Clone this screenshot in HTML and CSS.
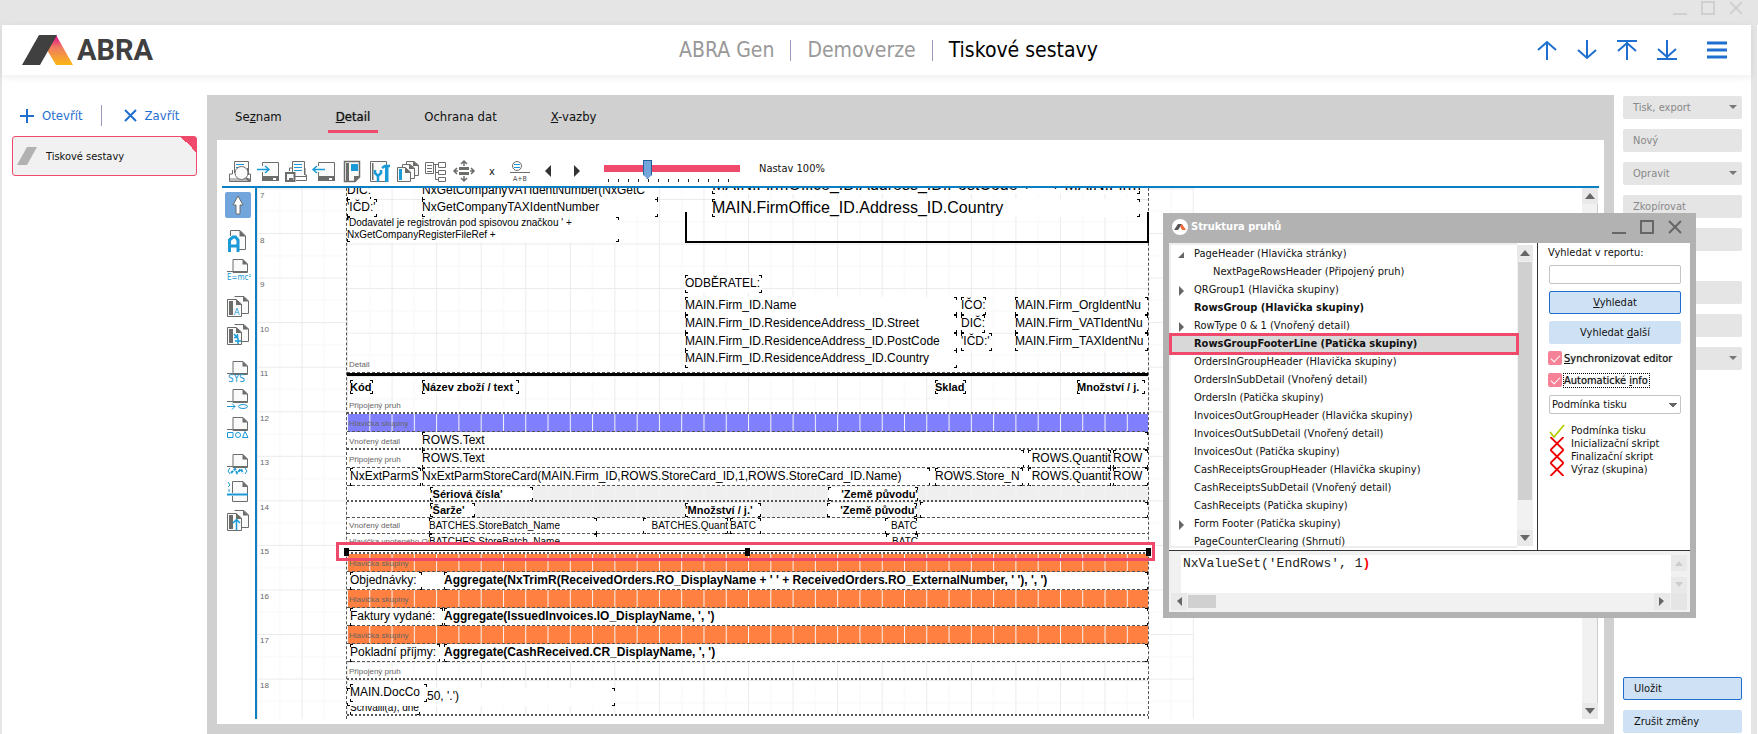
FILE: index.html
```
<!DOCTYPE html>
<html lang="cs">
<head>
    <meta charset="UTF-8">
    <meta name="viewport" content="width=device-width, initial-scale=1.0">
    <title>ABRA Gen - Tiskové sestavy</title>
    <link rel="stylesheet" href="styles.css">
</head>
<body>
    <!-- shared symbols -->
    <svg class="defs" aria-hidden="true">
        <defs>
            <linearGradient id="flame" x1="0" y1="0" x2="0" y2="1">
                <stop offset="0" stop-color="#e6008c"/>
                <stop offset="0.4" stop-color="#ee7a63"/>
                <stop offset="1" stop-color="#fbb714"/>
            </linearGradient>
            <pattern id="grid" width="44.56" height="44.56" patternUnits="userSpaceOnUse">
                <path d="M22.8 0V45M0 22.8H45" stroke="#f7f7f7" fill="none"/>
                <path d="M.5 0V45M0 .5H45" stroke="#ebebeb" fill="none"/>
            </pattern>
            <pattern id="cols" width="22.28" height="20" patternUnits="userSpaceOnUse">
                <path d="M.5 0V20" stroke="#f4f4f4" fill="none"/>
            </pattern>
            <symbol id="doc" viewBox="0 0 22 22">
                <path d="M6 12.5V1.5H16L20.500 6V14.500H6Z" fill="#fafafa" stroke="#6b6d6a"/>
                <path d="M15.500 1L21 6.500H15.500Z" fill="#6b6d6a"/>
                <path d="M0 13.500H21" stroke="#6b6d6a"/>
            </symbol>
            <symbol id="docs" viewBox="0 0 22 22">
                <path d="M7.500 1.500H17L21.500 6V18.500H12" fill="#fafafa" stroke="#6b6d6a"/>
                <path d="M16 1L22 6.500H16Z" fill="#6b6d6a"/>
                <path d="M.500 4.500H9L14.500 9V21.500H.500Z" fill="#fafafa" stroke="#6b6d6a"/>
                <path d="M9 4L15 10H9ZM2 6H6V20H2Z" fill="#6b6d6a"/>
            </symbol>
            <symbol id="cross" viewBox="0 0 15 13">
                <path d="M1 0L14 13M14 0L1 13" stroke="#f00000" stroke-width="1.800"/>
            </symbol>
        </defs>
    </svg>

    <div class="titlebar">
        <button type="button" aria-label="Minimalizovat"><svg width="16" height="16"><path d="M1 14H15" stroke="#d0d0d0" stroke-width="2"/></svg></button>
        <button type="button" aria-label="Maximalizovat"><svg width="16" height="16"><path d="M2 2H14V14H2Z" fill="none" stroke="#d0d0d0" stroke-width="2"/></svg></button>
        <button type="button" aria-label="Zavřít okno"><svg width="16" height="16"><path d="M2 2L14 14M14 2L2 14" stroke="#d0d0d0" stroke-width="2"/></svg></button>
    </div>

    <div class="app">
        <header class="header">
            <a class="logo" href="#" aria-label="ABRA">
                <svg width="52" height="30" viewBox="0 0 52 30"><path d="M25 15L34 0L51 30H34Z" fill="url(#flame)"/><path d="M0 30L17 0H35L18 30Z" fill="#404040"/></svg>
                <span>ABRA</span>
            </a>
            <nav class="crumbs">
                <a href="#">ABRA Gen</a>
                <a href="#">Demoverze</a>
                <span>Tiskové sestavy</span>
            </nav>
            <div class="header-tools">
                <button type="button" aria-label="Předchozí"><svg width="20" height="20"><path d="M10 20V2M1 10L10 2L19 10"/></svg></button>
                <button type="button" aria-label="Další"><svg width="20" height="20"><path d="M10 0V18M1 10L10 18L19 10"/></svg></button>
                <button type="button" aria-label="První"><svg width="20" height="20"><path d="M10 20V2M1 11L10 3L19 11M0 1H20"/></svg></button>
                <button type="button" aria-label="Poslední"><svg width="20" height="20"><path d="M10 0V18M1 9L10 17L19 9M0 19H20"/></svg></button>
                <button type="button" aria-label="Menu" class="menu"><svg width="20" height="20"><path d="M0 3H20M0 10H20M0 17H20"/></svg></button>
            </div>
        </header>

        <div class="workspace">
            <aside class="sidebar">
                <div class="agenda-actions">
                    <button type="button"><svg width="14" height="14"><path d="M7 0V14M0 7H14"/></svg>Otevřít</button>
                    <button type="button"><svg width="13" height="13"><path d="M1 1L12 12M12 1L1 12"/></svg>Zavřít</button>
                </div>
                <a class="agenda" href="#">
                    <svg width="20" height="18"><path d="M0 18L10 0H20L10 18Z" fill="#b2b2b2"/></svg>
                    Tiskové sestavy
                </a>
            </aside>

            <main class="main">
                <nav class="tabs">
                    <a href="#">Se<u>z</u>nam</a>
                    <a href="#" class="active"><u>D</u>etail</a>
                    <a href="#">Ochrana dat</a>
                    <a href="#"><u>X</u>-vazby</a>
                </nav>
                <div class="panel">
                    <div class="toolbar">
                        <button type="button" aria-label="Náhled"><svg class="icon"><path d="M5.500 13V1.500H19.500V15" fill="#fafafa" stroke="#6b6d6a"/><path d="M7 4.500H15M7 7.500H15" stroke="#1a9ad6"/><path d="M3.500 10V14H.500V21.500H21.500V14H18.500V8" fill="none" stroke="#6b6d6a"/><path d="M1 18H21V21H1Z" fill="#bbb"/><circle cx="12.500" cy="13" r="6.500" fill="#fafafa" stroke="#6b6d6a"/><path d="M17 18L21 21" stroke="#6b6d6a" stroke-width="2"/></svg></button>
                        <button type="button" aria-label="Import"><svg class="icon"><path d="M5.500 6V2.500H21.500V20.500H5.500V12" fill="#fafafa" stroke="#6b6d6a"/><path d="M5 16H22V21H5Z" fill="#6b6d6a"/><path d="M16 18H19V20H16Z" fill="#fff"/><path d="M0 9.500H11M8 6L12 9.500L8 13" fill="none" stroke="#1a9ad6" stroke-width="1.500"/></svg></button>
                        <button type="button" aria-label="Tisk"><svg class="icon"><path d="M7.500 13V1.500H19.500V15" fill="#fafafa" stroke="#6b6d6a"/><path d="M9 4.500H17M9 7.500H17M9 10.500H17" stroke="#1a9ad6"/><path d="M4.500 11V8H7M19 8H20V15H21.500V20.500H11M10 16.500H21" fill="none" stroke="#6b6d6a"/><path d="M1 13H9.500V21H1Z" fill="#fafafa" stroke="#6b6d6a" stroke-width="2"/><path d="M4 18H8V21H4Z" fill="#6b6d6a"/></svg></button>
                        <button type="button" aria-label="Export"><svg class="icon"><path d="M5.500 6V2.500H21.500V20.500H5.500V12" fill="#fafafa" stroke="#6b6d6a"/><path d="M5 16H22V21H5Z" fill="#6b6d6a"/><path d="M16 18H19V20H16Z" fill="#fff"/><path d="M1 9.500H12M4 6L0 9.500L4 13" fill="none" stroke="#1a9ad6" stroke-width="1.500"/></svg></button>
                        <button type="button" aria-label="Stránka"><svg class="icon"><path d="M3.500 1.500H18.500V17L14 21.500H3.500Z" fill="#fafafa" stroke="#6b6d6a" stroke-width="1.500"/><path d="M5 3H8V21H5ZM13 16H19L13 22Z" fill="#6b6d6a"/><path d="M10 4H17V11H10Z" fill="#1a9ad6"/></svg></button>
                        <button type="button" aria-label="Nastavení"><svg class="icon"><path d="M1.500 1.500H17.500V21.500H1.500Z" fill="#fafafa" stroke="#6b6d6a"/><path d="M3 3H4.500V20H3Z" fill="#6b6d6a"/><path d="M6 10V13L9 16V22M12 10V13L9 16M13 8L16 6H21" fill="none" stroke="#1a9ad6" stroke-width="2.500"/><path d="M16 7H19.500V22H16Z"/></svg></button>
                        <button type="button" aria-label="Kopie"><svg class="icon"><path d="M9.500 1.500H17L21.500 5V15.500H9.500Z" fill="#fafafa" stroke="#6b6d6a"/><path d="M16 1L22 6H16Z" fill="#6b6d6a"/><path d="M5.500 4.500H13L17.500 8V18.500H5.500Z" fill="#fafafa" stroke="#6b6d6a"/><path d="M12 4L18 9H12Z" fill="#6b6d6a"/><path d="M.500 7.500H8L13.500 12V21.500H.500Z" fill="#fafafa" stroke="#6b6d6a"/><path d="M8 7L14 13H8Z" fill="#6b6d6a"/><path d="M2 9H5V20H2Z" fill="#1a9ad6"/></svg></button>
                        <button type="button" aria-label="Struktura"><svg class="icon"><path d="M.500 2.500H8.500V13.500H.500ZM2 5.500H7M2 8.500H7M2 11.500H7M9 4.500H13M10.500 5V19.500H14M11 12.500H14M13.500 2.500H20.500V7.500H13.500ZM13.500 10.500H20.500V14.500H13.500ZM13.500 17.500H20.500V21.500H13.500Z" fill="none" stroke="#6b6d6a"/></svg></button>
                        <button type="button" aria-label="Posun"><svg class="icon"><path d="M6 7H16V10H6ZM6 12H16V15H6Z" fill="#6b6d6a"/><path d="M11 1V6M8 4L11 1L14 4M11 21V16M8 18L11 21L14 18M1 11H5M4 8L1 11L4 14M21 11H17M18 8L21 11L18 14" fill="none" stroke="#6b6d6a" stroke-width="1.500"/></svg></button>
                        <button type="button">x</button>
                        <button type="button" aria-label="Součet"><svg class="icon"><circle cx="8" cy="6" r="4.500" fill="#fff" stroke="#6b6d6a"/><path d="M5 4.500H11M5 7.500H11" stroke="#1a9ad6"/><path d="M1 12.500H21" stroke="#6b6d6a"/><text x="4" y="21" font-size="7" class="dark">A+B</text></svg></button>
                        <button type="button" aria-label="Vlevo"><svg class="icon"><path d="M14 5V17L8 11Z" fill="#333"/></svg></button>
                        <button type="button" aria-label="Vpravo"><svg class="icon"><path d="M9 5V17L15 11Z" fill="#333"/></svg></button>
                        <div class="zoom">
                            <input type="range" id="zoom" min="0" max="13" value="4">
                            <div class="ticks"></div>
                        </div>
                        <label for="zoom">Nastav 100%</label>
                    </div>

                    <div class="designer">
                        <div class="tools">
                            <div class="tool-group">
                                <button type="button" class="active" aria-label="Výběr"><svg class="icon"><path d="M11 2L16 11H13V20H9V11H6Z" fill="#fff" stroke="#6b6d6a"/></svg></button>
                            </div>
                            <div class="tool-group">
                                <button type="button" aria-label="Text"><svg class="icon"><path d="M3.500 6V.500H13L18.500 6V19.500H12" fill="#fafafa" stroke="#6b6d6a"/><path d="M12.500 0L19 6.500H12.500Z" fill="#6b6d6a"/><path d="M2.500 22V10L6 7H8.500L11 10V22M2 16H11" fill="none" stroke="#1a9ad6" stroke-width="3"/></svg></button>
                                <button type="button" aria-label="Výraz"><svg class="icon"><use href="#doc"/><text x="0" y="22" font-size="8">E=mc²</text></svg></button>
                            </div>
                            <div class="tool-group">
                                <button type="button" aria-label="Popisek"><svg class="icon"><use href="#docs"/><text x="7" y="20" font-size="9">A</text></svg></button>
                                <button type="button" aria-label="Vložit"><svg class="icon"><use href="#docs"/><path d="M7 11L10 14M10.500 11V14.500H7M11 15V21M8 18H14" fill="none" stroke="#1a9ad6" stroke-width="1.500"/></svg></button>
                            </div>
                            <div class="tool-group">
                                <button type="button" aria-label="Systém"><svg class="icon"><use href="#doc"/><text x="1" y="22" font-size="10">SYS</text></svg></button>
                                <button type="button" aria-label="Čára"><svg class="icon"><use href="#doc"/><path d="M0 18.500H8M5 15.500L8 18.500L5 21.500" fill="none" stroke="#1a9ad6"/><ellipse cx="16" cy="18.500" rx="4.500" ry="2" fill="none" stroke="#1a9ad6"/></svg></button>
                                <button type="button" aria-label="Tvary"><svg class="icon"><use href="#doc"/><path d="M.500 16.500H6V21.500H.500ZM18 15.500L21 21.500H15.500Z" fill="none" stroke="#1a9ad6"/><circle cx="11" cy="19" r="2.500" fill="none" stroke="#1a9ad6"/></svg></button>
                            </div>
                            <div class="tool-group">
                                <button type="button" aria-label="Kód"><svg class="icon"><use href="#doc"/><path d="M3 15L1 18L3 21M18 15L20 18L18 21" fill="none" stroke="#1a9ad6"/><path d="M4 20L8 16L10 20L14 16L16 20" fill="none" stroke="#1a9ad6" stroke-width="2" stroke-dasharray="3 1"/></svg></button>
                                <button type="button" aria-label="Zalomení"><svg class="icon"><path d="M5.500 12V.500H16L20.500 5V20.500H5.500V15" fill="#fafafa" stroke="#6b6d6a"/><path d="M15.500 0L21 6H15.500Z" fill="#6b6d6a"/><path d="M0 13.500H21" stroke="#1a9ad6" stroke-width="2"/><path d="M1 1L3 4L1 6M2 8V11" fill="none" stroke="#1a9ad6"/></svg></button>
                                <button type="button" aria-label="Podsestava"><svg class="icon"><use href="#docs"/><path d="M9.500 21V10M6 14L9.500 10.500L13 14" fill="none" stroke="#1a9ad6" stroke-width="1.500"/></svg></button>
                            </div>
                        </div>
                        <div class="surface">
                            <svg class="surface-grid" aria-hidden="true"><g transform="translate(0 45)"><rect y="-45" width="937" height="700" fill="url(#grid)"/></g></svg>
                            <div class="ruler"><span>7</span><span>8</span><span>9</span><span>10</span><span>11</span><span>12</span><span>13</span><span>14</span><span>15</span><span>16</span><span>17</span><span>18</span></div>
                            <div class="page" id="page"></div>
                        </div>
                        <div class="scroll">
                            <svg width="16" height="16"><path d="M3 11L8 5L13 11Z"/></svg>
                            <svg width="16" height="16"><path d="M3 5L8 11L13 5Z"/></svg>
                        </div>
                    </div>
                </div>
            </main>

            <aside class="actions">
                <button type="button" class="drop" disabled>Tisk, export</button>
                <button type="button" disabled>Nový</button>
                <button type="button" class="drop" disabled>Opravit</button>
                <button type="button" disabled>Zkopírovat</button>
                <button type="button" disabled aria-label="Vymazat"></button>
                <div class="spacer"></div>
                <button type="button" disabled aria-label="Filtr"></button>
                <button type="button" disabled aria-label="Třídění"></button>
                <button type="button" class="drop" disabled aria-label="Další funkce"></button>
                <button type="button" class="blue default push">Uložit</button>
                <button type="button" class="blue">Zrušit změny</button>
            </aside>
        </div>
    </div>

    <section class="dialog">
        <div class="dialog-title">
            <svg width="16" height="16"><circle cx="8" cy="8" r="8" fill="#fff"/><path d="M2 11L6 5H10L6 11Z" fill="#555"/><path d="M8 7L10 5L14 11H10Z" fill="#f26a3a"/></svg>
            <h2>Struktura pruhů</h2>
            <button type="button" aria-label="Minimalizovat"><svg width="16" height="16"><path d="M1 14H15" stroke="#666" stroke-width="2"/></svg></button>
            <button type="button" aria-label="Maximalizovat"><svg width="16" height="16"><path d="M2 2H14V14H2Z" fill="none" stroke="#666" stroke-width="2"/></svg></button>
            <button type="button" aria-label="Zavřít"><svg width="16" height="16"><path d="M2 2L14 14M14 2L2 14" stroke="#666" stroke-width="2"/></svg></button>
        </div>
        <div class="dialog-top">
            <ul class="tree">
                <li class="open">PageHeader (Hlavička stránky)</li>
                <li class="child">NextPageRowsHeader (Připojený pruh)</li>
                <li class="closed">QRGroup1 (Hlavička skupiny)</li>
                <li class="strong">RowsGroup (Hlavička skupiny)</li>
                <li class="closed">RowType 0 &amp; 1 (Vnořený detail)</li>
                <li class="strong selected">RowsGroupFooterLine (Patička skupiny)</li>
                <li>OrdersInGroupHeader (Hlavička skupiny)</li>
                <li>OrdersInSubDetail (Vnořený detail)</li>
                <li>OrdersIn (Patička skupiny)</li>
                <li>InvoicesOutGroupHeader (Hlavička skupiny)</li>
                <li>InvoicesOutSubDetail (Vnořený detail)</li>
                <li>InvoicesOut (Patička skupiny)</li>
                <li>CashReceiptsGroupHeader (Hlavička skupiny)</li>
                <li>CashReceiptsSubDetail (Vnořený detail)</li>
                <li>CashReceipts (Patička skupiny)</li>
                <li class="closed">Form Footer (Patička skupiny)</li>
                <li>PageCounterClearing (Shrnutí)</li>
            </ul>
            <div class="scroll tree-scroll">
                <svg width="16" height="16"><path d="M3 11L8 5L13 11Z"/></svg>
                <div class="thumb"></div>
                <svg width="16" height="16"><path d="M3 5L8 11L13 5Z"/></svg>
            </div>
            <form class="search">
                <label for="find">Vyhledat v reportu:</label>
                <input type="text" id="find">
                <button type="button" class="blue default"><u>V</u>yhledat</button>
                <button type="button" class="blue">Vyhledat <u>d</u>alší</button>
                <label class="check"><input type="checkbox" checked><span><u>S</u>ynchronizovat editor</span></label>
                <label class="check focus"><input type="checkbox" checked><span>Automatické <u>i</u>nfo</span></label>
                <select aria-label="Skript">
                    <option>Podmínka tisku</option>
                    <option>Inicializační skript</option>
                    <option>Finalizační skript</option>
                    <option>Výraz (skupina)</option>
                </select>
                <ul class="status">
                    <li><svg width="16" height="14"><path d="M1 8L5 13L15 1" fill="none" stroke="#b5cc00" stroke-width="1.800"/></svg>Podmínka tisku</li>
                    <li><svg width="16" height="13"><use href="#cross"/></svg>Inicializační skript</li>
                    <li><svg width="16" height="13"><use href="#cross"/></svg>Finalizační skript</li>
                    <li><svg width="16" height="13"><use href="#cross"/></svg>Výraz (skupina)</li>
                </ul>
            </form>
        </div>
        <div class="editor">
            <div class="editor-row">
                <code>NxValueSet('EndRows', 1<b>)</b></code>
                <div class="scroll off">
                    <svg width="16" height="16"><path d="M4 11L8 6L12 11Z"/></svg>
                    <svg width="16" height="16"><path d="M4 5L8 10L12 5Z"/></svg>
                </div>
            </div>
            <div class="hscroll">
                <svg width="16" height="17"><path d="M11 4V13L6 8Z"/></svg>
                <div class="thumb"></div>
                <svg width="16" height="17"><path d="M5 4V13L10 8Z"/></svg>
                <span class="corner"></span>
            </div>
        </div>
    </section>

    <script src="report.js"></script>
</body>
</html>
```
FILE: styles.css
```
* {
    box-sizing: border-box;
}

body {
    margin: 0;
    height: 100vh;
    overflow: hidden;
    display: flex;
    flex-direction: column;
    position: relative;
    background: #fff;
    color: #111;
    font-family: "DejaVu Sans Condensed", "Noto Sans", sans-serif;
    font-size: 11px;
}

button, input, select {
    font: inherit;
    color: inherit;
}

button {
    border: none;
    background: none;
    padding: 0;
}

a {
    color: inherit;
    text-decoration: none;
}

ul {
    list-style: none;
    margin: 0;
    padding: 0;
}

svg {
    display: block;
    flex: none;
}

.defs {
    position: absolute;
    width: 0;
    height: 0;
}

/* window frame */
.titlebar {
    height: 25px;
    flex: none;
    background: #e5e5e5;
    display: flex;
    justify-content: flex-end;
    align-items: flex-start;
    gap: 12px;
    padding-right: 14px;
}

.app {
    flex: 1;
    min-height: 0;
    display: flex;
    flex-direction: column;
    border-left: 2px solid #e5e5e5;
    border-right: 6px solid #e5e5e5;
    margin-right: 1px;
}

.header {
    height: 50px;
    flex: none;
    display: grid;
    grid-template-columns: 1fr auto 1fr;
    align-items: center;
    padding: 0 24px 0 20px;
    box-shadow: 0 2px 8px rgba(0, 0, 0, 0.08);
}

.logo {
    display: flex;
    align-items: center;
    gap: 3px;
    color: #404040;
    font: bold 29px/40px Roboto, sans-serif;
}

.crumbs {
    display: flex;
    align-items: center;
    font-size: 21px;
    line-height: 21px;
    color: #999;
    margin-left: 28px;
}

.crumbs > * + * {
    border-left: 1px solid #9999c0;
    padding-left: 16px;
    margin-left: 16px;
}

.crumbs span {
    color: #000;
}

.header-tools {
    display: flex;
    justify-content: flex-end;
    gap: 20px;
}

.header-tools path {
    stroke: #1f6fd0;
    stroke-width: 2;
    fill: none;
}

.header-tools .menu {
    margin-left: 10px;
}

.header-tools .menu path {
    stroke-width: 3;
}

.workspace {
    flex: 1;
    min-height: 0;
    display: flex;
    padding-top: 20px;
}

/* left side */
.sidebar {
    width: 205px;
    padding: 10px;
}

.agenda-actions {
    display: flex;
    font-size: 13px;
    color: #1f6fd0;
    padding: 0 8px;
    margin-bottom: 10px;
}

.agenda-actions button {
    display: flex;
    align-items: center;
    gap: 8px;
    height: 21px;
}

.agenda-actions button + button {
    border-left: 1px solid #9999c0;
    padding-left: 22px;
    margin-left: 18px;
}

.agenda-actions path {
    stroke: #1f6fd0;
    stroke-width: 2;
}

.agenda {
    display: flex;
    align-items: center;
    gap: 9px;
    height: 40px;
    padding-left: 4px;
    border: 1px solid #ef4a6b;
    border-radius: 3px;
    background: linear-gradient(45deg, transparent 50%, #ef4a6b 50%) top right / 15px 15px no-repeat #f1f1f1;
}

/* report panel */
.main {
    flex: 1;
    min-width: 0;
    display: flex;
    flex-direction: column;
    background: #d0d0d0;
    padding: 0 10px 10px;
}

.tabs {
    height: 45px;
    flex: none;
    display: flex;
    align-items: flex-start;
    gap: 38px;
    padding: 12px 10px 0;
    font-size: 13px;
}

.tabs a {
    line-height: 20px;
    padding: 0 8px 3px;
    border-bottom: 3px solid transparent;
}

.tabs .active {
    border-color: #ef4a6b;
    text-shadow: 0 0 1px #555;
}

.panel {
    flex: 1;
    min-height: 0;
    display: flex;
    flex-direction: column;
    background: #fff;
    padding: 16px 5px 5px;
}

.toolbar {
    height: 32px;
    flex: none;
    display: flex;
    align-items: flex-start;
    padding-left: 4px;
    padding-top: 4px;
    border-bottom: 2px solid #0a7fc4;
}

.toolbar button {
    width: 28px;
    height: 22px;
    display: flex;
    align-items: center;
    justify-content: center;
}

.icon {
    width: 22px;
    height: 22px;
    overflow: visible;
    fill: #1a9ad6;
}

.icon .dark {
    fill: #444;
}

.zoom {
    width: 136px;
    margin: 0 19px 0 14px;
}

.zoom input {
    appearance: none;
    display: block;
    width: 100%;
    height: 19px;
    margin: 0;
    background: linear-gradient(#ef4a6b, #ef4a6b) 0 5px / 100% 7px no-repeat;
}

.zoom input::-webkit-slider-thumb {
    appearance: none;
    width: 9px;
    height: 19px;
    background: #72a5dc;
    border: 1px solid #1b6298;
    clip-path: polygon(0 0, 100% 0, 100% 78%, 50% 100%, 0 78%);
}

.ticks {
    height: 3px;
    margin: 0 4px;
    background: repeating-linear-gradient(90deg, #222 0 1px, transparent 1px 10px);
}

.toolbar label {
    line-height: 18px;
}

.designer {
    flex: 1;
    min-height: 0;
    display: flex;
}

.tools {
    width: 35px;
    border-right: 2px solid #0a7fc4;
    padding: 4px 3px;
    display: flex;
    flex-direction: column;
    gap: 9px;
}

.tool-group {
    display: flex;
    flex-direction: column;
}

.tools button {
    width: 26px;
    height: 28px;
    display: flex;
    align-items: center;
    justify-content: center;
}

.tools .active {
    height: 26px;
    background: #72a5dc;
    border-radius: 2px;
}

.surface {
    flex: 1;
    min-width: 0;
    position: relative;
    overflow: hidden;
    font-family: "Liberation Sans", Arial, sans-serif;
}

.surface-grid {
    position: absolute;
    left: 0;
    top: 0;
    width: 937px;
    height: 100%;
}

.ruler {
    position: absolute;
    left: 3px;
    top: 2px;
    height: 501px;
    display: flex;
    flex-direction: column;
    justify-content: space-between;
    font-size: 8px;
    line-height: 11px;
    color: #666;
}

.page {
    position: relative;
    width: 803px;
    margin-left: 89px;
    border: dashed #555;
    border-width: 0 1px;
    background: #fff;
    height: 100%;
}

.band {
    position: relative;
}

.band-grid {
    position: absolute;
    left: 0;
    top: 0;
    width: 100%;
    height: 100%;
}

.band::after {
    content: "";
    position: absolute;
    left: 0;
    right: 0;
    bottom: 0;
    height: 1px;
    background: repeating-linear-gradient(90deg, #555 0 3px, transparent 3px 5px);
}

.band.heavy::after {
    height: 2px;
    background: repeating-linear-gradient(90deg, #555 0 2px, transparent 2px 4px);
}

.band.purple {
    background: #8080ff;
}

.band.orange {
    background: #ff8040;
}

.band.gray {
    background: #efefef;
}

.band.rule {
    border-top: 3px solid #000;
}

.band-label {
    position: absolute;
    left: 2px;
    bottom: 3px;
    font-size: 8px;
    line-height: 10px;
    color: #666;
}

.field {
    position: absolute;
    overflow: hidden;
    white-space: pre;
    font-size: 12px;
    line-height: 17px;
    color: #000;
    --ink: linear-gradient(#000, #000);
    background:
        var(--ink) 0 0 / 3px 1px, var(--ink) 0 0 / 1px 3px,
        var(--ink) 100% 0 / 3px 1px, var(--ink) 100% 0 / 1px 3px,
        var(--ink) 0 100% / 3px 1px, var(--ink) 0 100% / 1px 3px,
        var(--ink) 100% 100% / 3px 1px, var(--ink) 100% 100% / 1px 3px,
        #fff;
    background-repeat: no-repeat;
}

.field.large {
    font-size: 16px;
    line-height: 18px;
}

.field.bold {
    font-weight: bold;
}

.field.head {
    font-weight: bold;
    font-size: 11px;
    line-height: 14px;
}

.field.small {
    font-size: 10px;
    line-height: 12px;
}

.field.batch {
    font-size: 10px;
    line-height: 15px;
}

.field.right {
    text-align: right;
}

.field.blank {
    background: #fff;
}

.frame {
    position: absolute;
    border: 2px solid #000;
    border-top: none;
}

.selection {
    position: absolute;
    left: -11px;
    right: -7px;
    top: 354px;
    height: 19px;
    border: 3px solid #ef4a6b;
    background: linear-gradient(#fff, #fff) 0 0 / 100% 5px no-repeat;
}

.selection-line {
    position: absolute;
    left: -3px;
    right: -3px;
    top: 360px;
    height: 8px;
    display: flex;
    justify-content: space-between;
    background: linear-gradient(#000, #000) 0 2px / 100% 1px no-repeat;
}

.selection-line i {
    width: 5px;
    background: #000;
}

/* scroll bars */
.scroll {
    width: 16px;
    margin-right: 1px;
    display: flex;
    flex-direction: column;
    justify-content: space-between;
    background: #f1f1f1;
    border-right: 1px solid #ccc;
}

.scroll svg, .hscroll svg {
    background: #e9e9e9;
    fill: #666;
}

.thumb {
    background: #d0d0d0;
}

/* right side */
.actions {
    width: 137px;
    display: flex;
    flex-direction: column;
    gap: 10px;
    padding: 1px 9px;
}

.actions button {
    height: 23px;
    flex: none;
    text-align: left;
    padding-left: 10px;
    border-radius: 2px;
    background: #e5e5e5;
    color: #888;
}

.actions .drop {
    position: relative;
}

.actions .drop::after {
    content: "";
    position: absolute;
    right: 5px;
    top: 9px;
    border: 4px solid transparent;
    border-top-color: #777;
    border-bottom: none;
}

.actions .spacer {
    height: 10px;
}

.actions .push {
    margin-top: auto;
}

.actions .blue, .blue {
    background: #cfe1f5;
    color: #111;
    border: 1px solid #cfe1f5;
    border-radius: 2px;
}

.actions .default, .default {
    border-color: #1f6fd0;
}

/* band structure window */
.dialog {
    position: absolute;
    top: 213px;
    right: 62px;
    width: 533px;
    height: 405px;
    display: flex;
    flex-direction: column;
    border: 6px solid #b2b2b2;
    border-top: none;
    background: #fff;
}

.dialog-title {
    height: 30px;
    flex: none;
    display: flex;
    align-items: center;
    gap: 12px;
    padding: 0 7px 3px 3px;
    background: #b2b2b2;
}

.dialog-title h2 {
    flex: 1;
    margin: 0 0 0 -9px;
    font-size: 11px;
    color: #fff;
}

.dialog-top {
    flex: 1;
    min-height: 0;
    display: flex;
    border-bottom: 1px solid #333;
    padding-bottom: 2px;
}

/* the clip lets the selection outline reach past the sides */
.tree {
    flex: 1;
    min-width: 0;
    border: 2px solid #eee;
    border-right: none;
    clip-path: inset(0 -3px 0 -3px);
    z-index: 1;
}

.tree li {
    position: relative;
    height: 18px;
    line-height: 17px;
    padding-left: 23px;
    white-space: nowrap;
}

.tree .child {
    padding-left: 42px;
}

.tree .strong {
    font-weight: bold;
}

.tree .selected {
    background: #d8d8d8;
    outline: 3px solid #ef4a6b;
    outline-offset: -1px;
    z-index: 1;
}

.tree .closed::before {
    content: "";
    position: absolute;
    left: 8px;
    top: 5px;
    border: 5px solid transparent;
    border-left-color: #666;
    border-right: none;
}

.tree .open::before {
    content: "";
    position: absolute;
    left: 7px;
    top: 7px;
    border: 3px solid #666;
    border-top-color: transparent;
    border-left-color: transparent;
}

.tree-scroll {
    margin: 2px 4px 2px 0;
    border: none;
}

.tree-scroll .thumb {
    flex: 1;
    margin: 1px 1px 30px;
}

.search {
    width: 153px;
    display: flex;
    flex-direction: column;
    border-left: 1px solid #333;
    padding: 2px 9px 0 11px;
    margin-bottom: -2px;
}

.search > label:first-child {
    line-height: 16px;
    margin-bottom: 4px;
    margin-left: -1px;
}

.search input[type="text"], .search select {
    height: 19px;
    border: 1px solid #c4c4c4;
    border-radius: 2px;
    background: #fff;
    padding: 0 2px;
}

.search button {
    height: 23px;
    margin-top: 7px;
}

.check {
    display: flex;
    align-items: center;
    gap: 2px;
    height: 16px;
    margin: 6px 0 0 -1px;
    text-shadow: 0 0 1px #777;
    white-space: nowrap;
}

.check input {
    appearance: none;
    width: 14px;
    height: 14px;
    margin: 0;
    flex: none;
    border-radius: 2px;
    background: #f58296;
}

.check input::before {
    content: "";
    display: block;
    width: 8px;
    height: 4px;
    margin: 4px 3px;
    border-left: 1px solid #fff;
    border-bottom: 1px solid #fff;
    transform: rotate(-45deg);
}

.check.focus span {
    outline: 1px dotted #000;
    padding-right: 1px;
}

.search select {
    appearance: none;
    margin-top: 7px;
    background:
        linear-gradient(to top right, transparent 50%, #666 50%) right 7px top 7px / 4px 5px no-repeat,
        linear-gradient(to top left, transparent 50%, #666 50%) right 3px top 7px / 4px 5px no-repeat,
        #fff;
}

.status {
    margin-top: 10px;
}

.status li {
    display: flex;
    align-items: center;
    gap: 6px;
    height: 13px;
    white-space: nowrap;
}

.editor {
    height: 61px;
    flex: none;
    display: flex;
    flex-direction: column;
    background: #f1f1f1;
    padding: 4px 3px 2px 2px;
}

.editor-row {
    flex: 1;
    display: flex;
}

.editor code {
    flex: 1;
    background: #fff;
    margin-left: 10px;
    padding-left: 2px;
    font: 13px/17px "Liberation Mono", monospace;
    color: #222;
}

.editor b {
    color: #f00;
}

.off {
    margin: 0;
    border: none;
}

.off svg {
    fill: #ccc;
}

.hscroll {
    display: flex;
}

.hscroll .thumb {
    width: 28px;
    margin: 2px auto 2px 1px;
}

.corner {
    width: 16px;
    margin-left: 1px;
    background: #e5e5e5;
}
```
FILE: report.js
```
// field: [text, x, y, width, height, classes]
const bands = [
    { h: 185, label: 'Detail', grid: 11, fields: [
        ["DIČ:'", 0, -6, 24, 18],
        ['NxGetCompanyVATIdentNumber(NxGetC', 75, -6, 236, 18],
        ["'IČD:'", 0, 11, 30, 18],
        ['NxGetCompanyTAXIdentNumber', 75, 11, 236, 18],
        ["'Dodavatel je registrován pod spisovou značkou ' +\nNxGetCompanyRegisterFileRef +", 0, 29, 272, 25, 'small'],
        ["MAIN.FirmOffice_ID.Address_ID.PostCode + ' ' + MAIN.Firm", 365, -12, 428, 18, 'large'],
        ['MAIN.FirmOffice_ID.Address_ID.Country', 365, 11, 428, 18, 'large'],
        ['ODBĚRATEL:', 338, 87, 77, 18],
        ['MAIN.Firm_ID.Name', 338, 109, 272, 18],
        ['MAIN.Firm_ID.ResidenceAddress_ID.Street', 338, 127, 272, 18],
        ['MAIN.Firm_ID.ResidenceAddress_ID.PostCode', 338, 145, 272, 18],
        ['MAIN.Firm_ID.ResidenceAddress_ID.Country', 338, 162, 272, 18],
        ['IČO:', 614, 109, 25, 18],
        ['DIČ:', 614, 127, 24, 18],
        ["'IČD:'", 614, 145, 31, 18],
        ['MAIN.Firm_OrgIdentNu', 668, 109, 133, 18],
        ['MAIN.Firm_VATIdentNu', 668, 127, 133, 18],
        ['MAIN.Firm_TAXIdentNu', 668, 145, 133, 18]
    ] },
    { h: 41, label: 'Připojený pruh', grid: 0, style: 'rule heavy', fields: [
        ['Kód', 3, 4, 23, 14, 'head'],
        ['Název zboží / text', 75, 4, 97, 14, 'head'],
        ['Sklad', 588, 4, 31, 14, 'head'],
        ['Množství / j.', 730, 4, 68, 14, 'head']
    ] },
    { h: 18, label: 'Hlavička skupiny', style: 'purple' },
    { h: 18, label: 'Vnořený detail', style: 'heavy', fields: [['ROWS.Text', 75, 0, 726, 18]] },
    { h: 18, label: 'Připojený pruh', fields: [
        ['ROWS.Text', 75, 0, 602, 18],
        ['ROWS.Quantit', 681, 0, 83, 18, 'right'],
        ['ROW', 766, 0, 35, 18]
    ] },
    { h: 18, fields: [
        ['NxExtParmS', 3, 0, 71, 18],
        ['NxExtParmStoreCard(MAIN.Firm_ID,ROWS.StoreCard_ID,1,ROWS.StoreCard_ID.Name)', 75, 0, 508, 18],
        ['ROWS.Store_N', 588, 0, 88, 18],
        ['ROWS.Quantit', 681, 0, 83, 18, 'right'],
        ['ROW', 766, 0, 35, 18]
    ] },
    { h: 16, style: 'gray heavy', fields: [
        ['', 0, 0, 83, 16, 'blank'],
        ["'Sériová čísla'", 83, 1, 103, 14, 'head'],
        ["'Země původu'", 481, 1, 90, 14, 'head right']
    ] },
    { h: 16, style: 'gray', fields: [
        ['', 0, 0, 83, 16, 'blank'],
        ["'Šarže'", 83, 1, 45, 14, 'head'],
        ["'Množství / j.'", 338, 1, 76, 14, 'head'],
        ["'Země původu'", 480, 1, 90, 14, 'head right'],
        ['', 573, 0, 228, 16]
    ] },
    { h: 16, label: 'Vnořený detail', fields: [
        ['BATCHES.StoreBatch_Name', 82, 0, 168, 16, 'batch'],
        ['BATCHES.Quant', 296, 0, 85, 16, 'batch right'],
        ['BATC', 383, 0, 31, 16, 'batch'],
        ['BATC', 538, 0, 32, 16, 'batch right']
    ] },
    { h: 16, label: 'Hlavička vnořeného Op', fields: [
        ['BATCHES.StoreBatch_Name', 82, 0, 168, 16, 'batch'],
        ['BATC', 539, 0, 32, 16, 'batch right']
    ] },
    { h: 4, style: 'heavy' },
    { h: 18, label: 'Hlavička skupiny', style: 'orange' },
    { h: 18, fields: [
        ['Objednávky:', 3, 0, 72, 18],
        ["Aggregate(NxTrimR(ReceivedOrders.RO_DisplayName + ' ' + ReceivedOrders.RO_ExternalNumber, ' '), ', ')", 97, 0, 704, 18, 'bold']
    ] },
    { h: 18, label: 'Hlavička skupiny', style: 'orange' },
    { h: 18, fields: [
        ['Faktury vydané:', 3, 0, 93, 18],
        ["Aggregate(IssuedInvoices.IO_DisplayName, ', ')", 97, 0, 704, 18, 'bold']
    ] },
    { h: 18, label: 'Hlavička skupiny', style: 'orange' },
    { h: 18, fields: [
        ['Pokladní příjmy:', 3, 0, 90, 18],
        ["Aggregate(CashReceived.CR_DisplayName, ', ')", 97, 0, 704, 18, 'bold']
    ] },
    { h: 18, label: 'Připojený pruh', grid: 0, style: 'heavy' },
    { h: 36, grid: 0, style: 'heavy', fields: [
        ['Schválil(a), dne', 3, 22, 70, 13, 'small'],
        ["                        50, '.')", 0, 8, 268, 18],
        ['MAIN.DocCo', 3, 4, 77, 18]
    ] }
];

const page = document.getElementById('page');

function addGrid(el, fill, offset) {
    el.insertAdjacentHTML('afterbegin',
        `<svg class="band-grid"><g transform="translate(0 ${offset})"><rect y="${-offset}" width="100%" height="200" fill="url(#${fill})"/></g></svg>`);
}

bands.forEach(band => {
    const el = document.createElement('div');
    el.className = 'band ' + (band.style || '');
    el.style.height = band.h + 'px';

    if (band.label) {
        const label = document.createElement('span');
        label.className = 'band-label';
        label.textContent = band.label;
        el.appendChild(label);
    }

    (band.fields || []).forEach(([text, x, y, w, h, cls]) => {
        const field = document.createElement('div');
        field.className = 'field ' + (cls || '');
        field.textContent = text;
        field.style.left = x + 'px';
        field.style.top = y + 'px';
        field.style.width = w + 'px';
        field.style.height = h + 'px';
        el.appendChild(field);
    });

    if (band.grid !== undefined) {
        addGrid(el, 'grid', band.grid);
    } else if (/purple|orange|gray/.test(band.style)) {
        addGrid(el, 'cols', 0);
    }
    page.appendChild(el);
});

// supplier frame
const frame = document.createElement('div');
frame.className = 'frame';
frame.style.left = '338px';
frame.style.top = '24px';
frame.style.width = '464px';
frame.style.height = '31px';
page.appendChild(frame);

// selected band
page.insertAdjacentHTML('beforeend', '<div class="selection"></div><div class="selection-line"><i></i><i></i><i></i></div>');
```
